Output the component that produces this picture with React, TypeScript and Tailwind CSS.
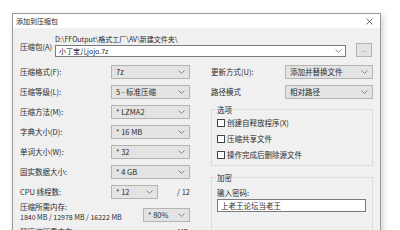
import React from "react";

function Chevron() {
  return (
    <svg width="7" height="4" viewBox="0 0 7 4" className="shrink-0">
      <polyline points="0.5,0.5 3.5,3.5 6.5,0.5" fill="none" stroke="#707070" strokeWidth="0.8" />
    </svg>
  );
}

function Select({ value, className }: { value: string; className: string }) {
  return (
    <div
      className={`flex h-[14px] items-center justify-between border border-[#b4b4b4] bg-[#e3e3e3] pl-[4px] pr-[4px] ${className}`}
    >
      <span className="whitespace-nowrap">{value}</span>
      <Chevron />
    </div>
  );
}

function Row({ label, value }: { label: string; value: string }) {
  return (
    <div className="flex h-[14px] items-center">
      <span className="w-[91px] whitespace-nowrap">{label}</span>
      <Select value={value} className="w-[79px]" />
    </div>
  );
}

function Check({ label }: { label: string }) {
  return (
    <div className="flex h-[10px] items-center gap-[2px]">
      <span className="h-[8px] w-[8px] border border-[#444] bg-white" />
      <span className="whitespace-nowrap">{label}</span>
    </div>
  );
}

export default function App() {
  return (
    <div className="h-[230px] w-[400px] overflow-hidden bg-white pl-[12px] pt-[13px] font-['Noto_Sans_CJK_SC',sans-serif] text-[7.5px] leading-[10px] text-[#2a2a2a]">
      <div className="h-[240px] w-[369px] border border-[#999] shadow-[2px_2px_6px_rgba(0,0,0,0.18)]">
        {/* title bar */}
        <div className="flex h-[14px] items-center justify-between bg-white pl-[3px] pr-[7px] text-[7px]">
          <span>添加到压缩包</span>
          <svg width="7" height="7" viewBox="0 0 7 7">
            <path d="M0.5 0.5 L6.5 6.5 M6.5 0.5 L0.5 6.5" stroke="#444" strokeWidth="0.8" />
          </svg>
        </div>

        <div className="h-[226px] bg-[#f0f0f0] pl-[7px] pt-[7px]">
          {/* archive row */}
          <div className="flex">
            <span className="mt-[7px] w-[35px] whitespace-nowrap">压缩包(A)</span>
            <div className="flex flex-col">
              <span className="h-[9px] whitespace-nowrap text-[7px] leading-[9px]">
                D:\FFOutput\格式工厂\AV\新建文件夹\
              </span>
              <div className="flex items-center">
                <div className="flex h-[12px] w-[291px] items-center justify-between border border-[#7a7a7a] bg-white pl-[3px] pr-[3px]">
                  <span className="text-[7px]">小丁宝儿jojo.7z</span>
                  <Chevron />
                </div>
                <div className="ml-[10px] -mt-[1px] flex h-[14px] w-[16px] items-center justify-center border border-[#b4b4b4] bg-[#e3e3e3] text-[6px] text-[#666]">
                  ...
                </div>
              </div>
            </div>
          </div>

          <div className="mt-[8px] flex">
            {/* left column */}
            <div className="flex w-[170px] flex-col gap-[6px]">
              <Row label="压缩格式(F):" value="7z" />
              <Row label="压缩等级(L):" value="5 - 标准压缩" />
              <Row label="压缩方法(M):" value="* LZMA2" />
              <Row label="字典大小(D):" value="* 16 MB" />
              <Row label="单词大小(W):" value="* 32" />
              <Row label="固实数据大小:" value="* 4 GB" />
              <div className="flex h-[14px] items-center">
                <span className="w-[91px] whitespace-nowrap">CPU 线程数:</span>
                <Select value="* 12" className="w-[47px]" />
                <span className="ml-auto whitespace-nowrap">/ 12</span>
              </div>
              <div className="-mt-[3px] flex items-end justify-between">
                <div className="flex flex-col">
                  <span className="whitespace-nowrap">压缩所需内存:</span>
                  <span className="whitespace-nowrap text-[7px]">1840 MB / 12978 MB / 16222 MB</span>
                </div>
                <Select value="* 80%" className="w-[47px]" />
              </div>
              <div className="-mt-[1px] flex items-center justify-between">
                <span className="whitespace-nowrap">解压缩所需内存:</span>
                <span className="mr-[2px] whitespace-nowrap text-[7px]">10 MB</span>
              </div>
            </div>

            {/* right column */}
            <div className="ml-[21px] flex w-[162px] flex-col">
              <div className="flex h-[14px] items-center">
                <span className="w-[74px] whitespace-nowrap">更新方式(U):</span>
                <Select value="添加并替换文件" className="w-[88px]" />
              </div>
              <div className="mt-[6px] flex h-[14px] items-center">
                <span className="w-[74px] whitespace-nowrap">路径模式</span>
                <Select value="相对路径" className="w-[88px]" />
              </div>

              <div className="relative mt-[10px] flex flex-col gap-[6px] border border-[#dcdcdc] pb-[5px] pl-[5px] pt-[8px]">
                <span className="absolute -top-[5px] left-[4px] bg-[#f0f0f0] px-[1px]">选项</span>
                <Check label="创建自释放程序(X)" />
                <Check label="压缩共享文件" />
                <Check label="操作完成后删除源文件" />
              </div>

              <div className="relative mt-[11px] flex h-[60px] flex-col border border-[#dcdcdc] pl-[5px] pt-[10px]">
                <span className="absolute -top-[5px] left-[4px] bg-[#f0f0f0] px-[1px]">加密</span>
                <span className="whitespace-nowrap">输入密码:</span>
                <div className="mt-[1px] flex h-[13px] w-[149px] items-center border border-[#7a7a7a] bg-white pl-[3px]">
                  上老王论坛当老王
                </div>
              </div>
            </div>
          </div>
        </div>
      </div>
    </div>
  );
}
